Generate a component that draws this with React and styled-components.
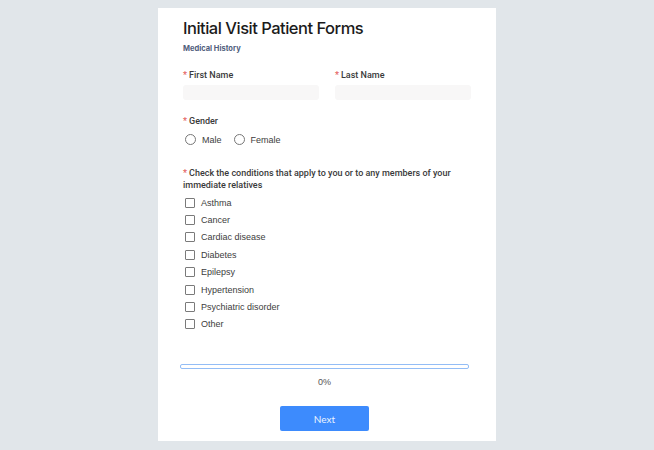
import React from "react";
import styled, { createGlobalStyle } from "styled-components";

const Global = createGlobalStyle`
  html, body { margin: 0; padding: 0; background: #e1e6ea; }
  body { padding-top: 8px; font-family: Inter, "Noto Sans", sans-serif; }
  * { box-sizing: border-box; }
`;

const Card = styled.div`
  width: 338px;
  height: 433px;
  margin: 0 auto;
  background: #ffffff;
  display: flex;
  flex-direction: column;
`;

const Body = styled.div`
  padding: 9px 25px 0 25px;
  display: flex;
  flex-direction: column;
`;

const Title = styled.h1`
  margin: 0;
  font-family: Inter, sans-serif;
  font-weight: 500;
  font-size: 16.5px;
  line-height: 22px;
  letter-spacing: -0.5px;
  color: #1b1b1b;
`;

const Subtitle = styled.div`
  margin-top: 5px;
  font-family: Inter, sans-serif;
  font-weight: 700;
  font-size: 7.5px;
  line-height: 10px;
  color: #4f5d7c;
`;

const Row = styled.div`
  display: grid;
  grid-template-columns: 1fr 1fr;
  gap: 16px;
  margin-top: ${(p) => p.$mt || 0}px;
`;

const Field = styled.div`
  display: flex;
  flex-direction: column;
  margin-top: ${(p) => p.$mt || 0}px;
`;

const Label = styled.div`
  font-family: Roboto, sans-serif;
  font-weight: 500;
  font-size: 9px;
  line-height: 12px;
  color: #3a3a3a;
  &::before {
    content: "*";
    color: #e4605e;
    margin-right: 2px;
  }
`;

const Input = styled.div`
  margin-top: 4px;
  height: 15px;
  border-radius: 3px;
  background: #f8f7f7;
`;

const RadioRow = styled.div`
  display: flex;
  align-items: center;
  margin-top: 7px;
  padding-left: 2px;
`;

const OptionText = styled.span`
  font-family: "Liberation Sans", Arial, sans-serif;
  font-size: 9px;
  color: #3d3d3d;
  margin-left: 6px;
  margin-right: ${(p) => p.$mr || 0}px;
`;

const Radio = styled.span`
  width: 11px;
  height: 11px;
  border: 1px solid #777;
  border-radius: 50%;
  display: inline-block;
`;

const CheckList = styled.div`
  display: flex;
  flex-direction: column;
  margin-top: 3px;
  padding-left: 2px;
`;

const CheckItem = styled.div`
  display: flex;
  align-items: center;
  height: 17.4px;
`;

const Box = styled.span`
  width: 10px;
  height: 10px;
  border: 1px solid #7a7a7a;
  border-radius: 1px;
  display: inline-block;
`;

const Footer = styled.div`
  margin-top: auto;
  padding: 0 27px 10px 22px;
  display: flex;
  flex-direction: column;
  align-items: center;
`;

const Bar = styled.div`
  width: 100%;
  height: 5px;
  border: 1px solid #93bdf6;
  border-radius: 2px;
  background: #fff;
`;

const Percent = styled.div`
  margin-top: 7px;
  font-family: "Liberation Sans", Arial, sans-serif;
  font-size: 9px;
  line-height: 12px;
  color: #555;
`;

const Button = styled.button`
  margin-top: 18px;
  width: 89px;
  height: 25px;
  border: none;
  border-radius: 2px;
  background: #3d8bfd;
  color: #eaf3ff;
  font-family: Lato, sans-serif;
  font-size: 10px;
`;

const conditions = [
  "Asthma",
  "Cancer",
  "Cardiac disease",
  "Diabetes",
  "Epilepsy",
  "Hypertension",
  "Psychiatric disorder",
  "Other",
];

export default function App() {
  return (
    <>
      <Global />
      <Card>
        <Body>
          <Title>Initial Visit Patient Forms</Title>
          <Subtitle>Medical History</Subtitle>
          <Row $mt={15}>
            <Field>
              <Label>First Name</Label>
              <Input />
            </Field>
            <Field>
              <Label>Last Name</Label>
              <Input />
            </Field>
          </Row>
          <Field $mt={15}>
            <Label>Gender</Label>
            <RadioRow>
              <Radio />
              <OptionText $mr={12}>Male</OptionText>
              <Radio />
              <OptionText>Female</OptionText>
            </RadioRow>
          </Field>
          <Field $mt={22}>
            <Label>Check the conditions that apply to you or to any members of your immediate relatives</Label>
            <CheckList>
              {conditions.map((c) => (
                <CheckItem key={c}>
                  <Box />
                  <OptionText>{c}</OptionText>
                </CheckItem>
              ))}
            </CheckList>
          </Field>
        </Body>
        <Footer>
          <Bar />
          <Percent>0%</Percent>
          <Button>Next</Button>
        </Footer>
      </Card>
    </>
  );
}
